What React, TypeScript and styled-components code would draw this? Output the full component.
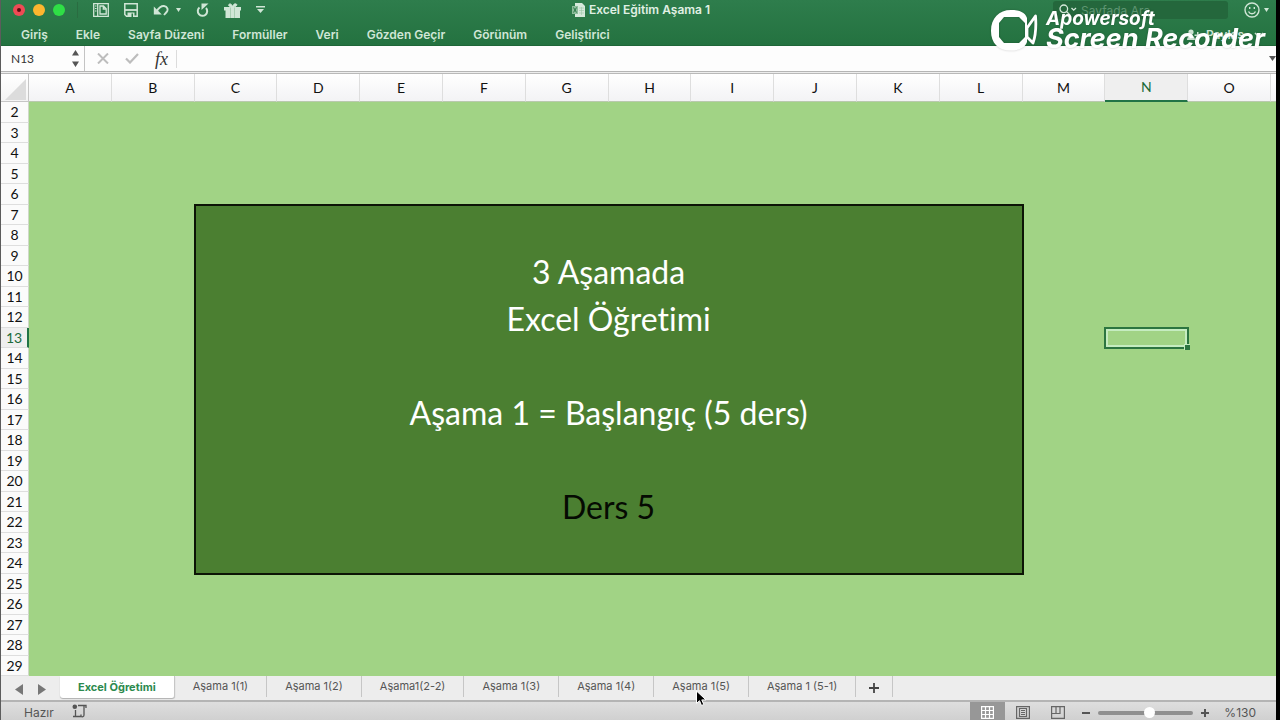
import React from "react";
import styled, { createGlobalStyle, css } from "styled-components";

const UI = `Inter, "Liberation Sans", sans-serif`;
const SHEET = `Lato, "Open Sans", sans-serif`;

const GlobalStyle = createGlobalStyle`
  *, *::before, *::after { box-sizing: border-box; }
  body { margin: 0; background: #000; }
  button, input { font: inherit; color: inherit; border: 0; background: none; padding: 0; margin: 0; }
  svg { display: block; flex: none; }
`;

const Window = styled.div`
  position: relative;
  display: flex;
  flex-direction: column;
  height: 100vh;
  margin-right: 4px;
  border-left: 1px solid #5c5c5c;
  background: #fff;
  font-family: ${UI};
  overflow: hidden;
`;

const Ribbon = styled.header`
  height: 46px;
  flex: none;
  background: linear-gradient(#2e7d4c, #247240);
  border-bottom: 1px solid #1f6638;
  color: #d0e6d6;
`;

const TitleBar = styled.div`
  display: grid;
  grid-template-columns: 1fr auto 1fr;
  align-items: center;
  height: 20px;
  padding: 0 7px 0 12px;
`;

const Group = styled.div<{ $gap: number; $end?: boolean }>`
  display: flex;
  align-items: center;
  gap: ${(p) => p.$gap}px;
  justify-content: ${(p) => (p.$end ? "flex-end" : "flex-start")};
`;

const Light = styled.button<{ $color: string; $dot?: boolean }>`
  display: grid;
  place-items: center;
  width: 12px;
  height: 12px;
  border-radius: 50%;
  background: ${(p) => p.$color};
  &::after {
    content: "";
    width: 4px;
    height: 4px;
    border-radius: 50%;
    background: ${(p) => (p.$dot ? "#5c0c10" : "transparent")};
  }
`;

const Divider = styled.span`
  width: 1px;
  height: 16px;
  margin: 0 15px 0 12px;
  background: #2a6c41;
`;

const IconButton = styled.button`
  display: inline-flex;
  align-items: center;
  justify-content: center;
`;

const DocTitle = styled.h1`
  display: flex;
  align-items: center;
  gap: 4px;
  margin: 0;
  font-size: 12px;
  line-height: 20px;
  font-weight: 600;
  color: #e0f0e4;
`;

const Search = styled.label`
  display: flex;
  align-items: center;
  gap: 4px;
  width: 175px;
  height: 18px;
  padding: 0 6px;
  border-radius: 3px;
  background: #24673c;
  input {
    width: 130px;
    font-size: 12px;
    outline: 0;
  }
  input::placeholder { color: #5f9572; opacity: 1; }
`;

const MenuRow = styled.nav`
  display: flex;
  align-items: center;
  gap: 28px;
  height: 26px;
  padding: 3px 12px 0 20px;
  font-size: 12px;
  font-weight: 600;
`;

const MenuItem = styled.button`
  line-height: 18px;
  white-space: nowrap;
`;

const Share = styled.div`
  display: flex;
  align-items: center;
  gap: 5px;
  margin-left: auto;
`;

const CollapseButton = styled(IconButton)`
  margin-left: 5px;
`;

const FormulaBar = styled.div`
  display: flex;
  align-items: center;
  flex: none;
  height: 25px;
  background: #fdfdfd;
  color: #333;
`;

const NameBox = styled.label`
  display: flex;
  align-items: center;
  justify-content: space-between;
  width: 84px;
  height: 25px;
  padding: 0 5px 0 10px;
  border-right: 1px solid #c4c4c4;
  input {
    width: 50px;
    font-family: ${SHEET};
    font-size: 12px;
    outline: 0;
  }
`;

const FormulaTools = styled.div`
  display: flex;
  align-items: center;
  gap: 16px;
  padding: 0 8px 0 12px;
  height: 18px;
  border-right: 1px solid #dcdcdc;
`;

const Fx = styled.span`
  font-family: "Liberation Serif", serif;
  font-style: italic;
  font-size: 18px;
  line-height: 18px;
`;

const FormulaInput = styled.input`
  flex: 1;
  min-width: 0;
  height: 24px;
  outline: 0;
`;

const SheetArea = styled.main`
  flex: 1;
  min-height: 0;
  border-top: 1px solid #b5b5b5;
  box-shadow: inset 0 1px #ededed, inset 0 2px #b9b9b9;
  padding-top: 2px;
`;

const Table = styled.table`
  width: 100%;
  height: 100%;
  table-layout: fixed;
  border-collapse: separate;
  border-spacing: 0;
  font-family: ${SHEET};
  font-variant-ligatures: none;
  color: #111;
  td, th { padding: 0; }
`;

const Corner = styled.th`
  width: 28px;
  height: 28px;
  background: linear-gradient(#fff, #f4f4f4);
  border-right: 1px solid #c6c6c6;
  border-bottom: 1px solid #c6c6c6;
  svg { margin: 3px 0 0 4px; }
`;

const ColHead = styled.th<{ $active?: boolean }>`
  height: 28px;
  background: linear-gradient(#fff, #f3f3f5);
  border-right: 1px solid #dedede;
  border-bottom: 1px solid #b9c9ae;
  font-size: 14px;
  line-height: 24px;
  font-weight: 400;
  ${(p) =>
    p.$active &&
    css`
      background: #efefef;
      color: #1d6b3a;
      border-bottom: 2px solid #217346;
    `}
`;

const EdgeHead = styled(ColHead)`
  width: 5px;
  border-right: 0;
`;

const RowHead = styled.th<{ $active?: boolean }>`
  background: ${(p) => (p.$active ? "#efefef" : "#fbfbfb")};
  border-bottom: 1px solid #dedede;
  border-right: ${(p) => (p.$active ? "2px solid #217346" : "1px solid #cfd8c8")};
  color: ${(p) => (p.$active ? "#1d6b3a" : "inherit")};
  font-size: 14px;
  line-height: 18px;
  font-weight: 400;
  && { padding-top: 1px; }
`;

const Cell = styled.td`
  background: #a1d385;
`;

const SelectedCell = styled(Cell)`
  position: relative;
  outline: 2px solid #2c7540;
  outline-offset: -1px;
  box-shadow: inset 0 0 0 3px #c5ecc0;
  &::after {
    content: "";
    position: absolute;
    right: -2px;
    bottom: -2px;
    width: 6px;
    height: 6px;
    background: #2c7540;
    border-top: 1px solid #c5ecc0;
    border-left: 1px solid #c5ecc0;
  }
`;

const MergedCell = styled.td`
  background: #4b7f31;
  outline: 2px solid #0c1406;
  outline-offset: -1px;
  vertical-align: middle;
  text-align: center;
  font-size: 32px;
  line-height: 47px;
`;

const Line = styled.div<{ $dark?: boolean }>`
  min-height: 47px;
  color: ${(p) => (p.$dark ? "#050a02" : "#fff")};
`;

const TabStrip = styled.div`
  display: flex;
  flex: none;
  height: 26px;
  background: #ededed;
  border-bottom: 2px solid #b4b4b4;
  color: #555;
`;

const TabArrows = styled.div`
  display: flex;
  align-items: center;
  gap: 15px;
  width: 59px;
  padding: 2px 0 0 14px;
`;

const SheetTab = styled.button<{ $active?: boolean }>`
  height: 21px;
  padding: 0 18px;
  border-right: 1px solid #c6c6c6;
  font-size: 11px;
  line-height: 21px;
  white-space: nowrap;
  ${(p) =>
    p.$active &&
    css`
      height: 22px;
      background: #fff;
      color: #2c8a4e;
      font-weight: 700;
      border-radius: 0 0 3px 3px;
      box-shadow: 0 1px 1px #b0b0b0;
    `}
`;

const AddTab = styled.button`
  display: grid;
  place-items: center;
  width: 37px;
  height: 21px;
  padding-top: 3px;
  border-right: 1px solid #c6c6c6;
`;

const StatusBar = styled.footer`
  display: flex;
  align-items: center;
  justify-content: space-between;
  flex: none;
  height: 18px;
  padding: 0 20px 0 23px;
  background: linear-gradient(#dedede, #d0d0d0);
  color: #555;
  font-size: 12px;
  line-height: 18px;
  overflow: hidden;
`;

const StatusText = styled.span`
  padding-top: 4px;
`;

const ViewButton = styled.button<{ $active?: boolean }>`
  display: grid;
  place-items: center;
  width: 35px;
  height: 18px;
  padding-top: 3px;
  background: ${(p) => (p.$active ? "#979797" : "transparent")};
`;

const ZoomControls = styled.div`
  display: flex;
  align-items: center;
  gap: 8px;
  margin-left: 7px;
  padding-top: 3px;
`;

const ZoomSlider = styled.input`
  appearance: none;
  width: 95px;
  height: 4px;
  border-radius: 2px;
  background: #8f8f8f;
  &::-webkit-slider-thumb {
    appearance: none;
    width: 11px;
    height: 11px;
    border-radius: 50%;
    background: #fff;
  }
`;

const ZoomValue = styled.span`
  width: 39px;
  text-align: right;
`;

const Watermark = styled.div`
  position: absolute;
  top: 9px;
  right: 11px;
  display: flex;
  gap: 8px;
  color: #fff;
  font-style: italic;
  font-weight: 700;
  pointer-events: none;
  filter: drop-shadow(0 0 1px rgba(0, 0, 0, 0.2));
`;

const WatermarkSmall = styled.div`
  font-size: 19px;
  line-height: 20px;
`;

const WatermarkLarge = styled.div`
  font-size: 27px;
  line-height: 20px;
  white-space: nowrap;
`;

const Pointer = styled.svg`
  position: absolute;
  left: 694px;
  top: 690px;
`;

const menus = ["Giriş", "Ekle", "Sayfa Düzeni", "Formüller", "Veri", "Gözden Geçir", "Görünüm", "Geliştirici"];
const columns = "ABCDEFGHIJKLMNO".split("");
const rows = Array.from({ length: 28 }, (_, i) => i + 2);
const sheets = ["Excel Öğretimi", "Aşama 1(1)", "Aşama 1(2)", "Aşama1(2-2)", "Aşama 1(3)", "Aşama 1(4)", "Aşama 1(5)", "Aşama 1 (5-1)"];

const Caret = () => (
  <svg width="5" height="4" viewBox="0 0 5 4"><path d="M0 0h5L2.5 4z" fill="currentColor" /></svg>
);

const QuickAccess = () => (
  <Group $gap={0}>
    <Group $gap={8}>
      <Light $color="#ee4b55" $dot aria-label="Kapat" />
      <Light $color="#fdb62f" aria-label="Küçült" />
      <Light $color="#2fdf46" aria-label="Büyüt" />
    </Group>
    <Divider />
    <Group $gap={15}>
      <IconButton aria-label="Şablonlar">
        <svg width="16" height="14" viewBox="0 0 16 14" fill="none" stroke="currentColor" strokeWidth="1.3">
          <path d="M.7.7h14.6v12.6H.7zM4.700 1v12" />
          <path d="M2 3h1.500M2 5.500h1.500M2 8h1.500" strokeWidth="1" />
          <path d="M7 3h3.500l2.700 2.700V11H7zM10.300 3v3h3" />
        </svg>
      </IconButton>
      <IconButton aria-label="Kaydet">
        <svg width="14" height="14" viewBox="0 0 14 14" fill="none" stroke="currentColor" strokeWidth="1.5">
          <path d="M.8.8h12.400v12.400H2.500L.8 11.500z" />
          <path d="M1 7h12" strokeWidth="1.800" />
          <path d="M3.500 9.500h7V14h-7z" fill="currentColor" stroke="none" />
          <path d="M7.500 10.500h1.500V14H7.500z" fill="#2b7848" stroke="none" />
        </svg>
      </IconButton>
      <Group $gap={7}>
        <IconButton aria-label="Geri Al">
          <svg width="16" height="12" viewBox="0 0 16 12">
            <path d="M3.500 7.500C6 3.500 8.500 1.800 11 2c3.600.3 4.400 4 2.600 6L11 11" fill="none" stroke="currentColor" strokeWidth="1.900" />
            <path d="M.8 2.500v8h8z" fill="currentColor" />
          </svg>
        </IconButton>
        <Caret />
      </Group>
      <IconButton aria-label="Yinele">
        <svg width="13" height="14" viewBox="0 0 13 14">
          <path d="M3.500 4.500A4.700 4.700 0 1 0 10 5" fill="none" stroke="currentColor" strokeWidth="2" />
          <path d="M5.500 .5h7L5.500 7z" fill="currentColor" />
        </svg>
      </IconButton>
      <IconButton aria-label="Hediye">
        <svg width="17" height="15" viewBox="0 0 17 15">
          <path d="M0 4h17v3.500h-1V15H1.500V7.500H0z" fill="currentColor" />
          <path d="M8.500 4C5 4 3.500 2 5.500 1 7.200.6 8 2 8.500 4c.5-2 1.500-3.600 3.500-3C14 1.500 12.500 4 8.500 4z" fill="currentColor" stroke="currentColor" strokeWidth="1" />
          <path d="M6.500 4.500V15M10.500 4.500V15" stroke="#8dbd9b" strokeWidth=".6" />
        </svg>
      </IconButton>
      <IconButton aria-label="Özelleştir">
        <svg width="9" height="8" viewBox="0 0 9 8" fill="currentColor"><path d="M0 0h9v1.500H0zM1 3h7L4.500 7z" /></svg>
      </IconButton>
    </Group>
  </Group>
);

export default function App() {
  return (
    <>
      <GlobalStyle />
      <Window>
        <Ribbon>
          <TitleBar>
            <QuickAccess />
            <DocTitle>
              <svg width="13" height="14" viewBox="0 0 13 14">
                <path d="M4 0h6l3 3v11H3V0z" fill="#d6e9db" />
                <path d="M0 3h6v8H0z" fill="#8dbd9b" />
                <path d="M1.500 4.500l3 5M4.500 4.500l-3 5" stroke="#2b7848" />
                <path d="M7 5h5M7 7.500h5M7 10h5M9.500 4v8" stroke="#9cc7a8" strokeWidth=".6" />
              </svg>
              Excel Eğitim Aşama 1
            </DocTitle>
            <Group $gap={16} $end>
              <Search>
                <svg width="18" height="12" viewBox="0 0 18 12" fill="none" stroke="#d6e9db" strokeWidth="1.300">
                  <circle cx="4.800" cy="4.800" r="3.800" /><path d="M7.500 7.500L11 11M12.500 4l2.200 2.200L17 4" />
                </svg>
                <input type="search" placeholder="Sayfada Ara" aria-label="Sayfada Ara" />
              </Search>
              <Group $gap={4}>
                <IconButton aria-label="Geri bildirim">
                  <svg width="16" height="16" viewBox="0 0 16 16" fill="none" stroke="currentColor" strokeWidth="1.400">
                    <circle cx="8" cy="8" r="7" /><path d="M4.500 9.500c1.500 3 5.500 3 7 0M5.700 5v2M10.300 5v2" />
                  </svg>
                </IconButton>
                <Caret />
              </Group>
            </Group>
          </TitleBar>
          <MenuRow>
            {menus.map((m) => <MenuItem key={m}>{m}</MenuItem>)}
            <Share>
              <svg width="14" height="12" viewBox="0 0 14 12" fill="currentColor">
                <circle cx="4" cy="3" r="2.600" /><path d="M0 11c0-6 8-6 8 0zM10 3h1.500v2.500H14V7h-2.500v2.500H10V7H7.500V5.500H10z" />
              </svg>
              <MenuItem>Paylaş</MenuItem>
              <CollapseButton aria-label="Şeridi daralt">
                <svg width="10" height="6" viewBox="0 0 10 6" fill="none" stroke="currentColor" strokeWidth="1.500"><path d="M1 1l4 4 4-4" /></svg>
              </CollapseButton>
            </Share>
          </MenuRow>
        </Ribbon>

        <FormulaBar>
          <NameBox>
            <input defaultValue="N13" aria-label="Ad Kutusu" />
            <svg width="7" height="17" viewBox="0 0 7 17" fill="#555"><path d="M0 5.500L3.500 0 7 5.500zM0 11.500h7L3.500 17z" /></svg>
          </NameBox>
          <FormulaTools>
            <IconButton aria-label="İptal">
              <svg width="12" height="11" viewBox="0 0 12 11" stroke="#bdbdbd" strokeWidth="2"><path d="M1 .5l10 10M11 .5L1 10.500" /></svg>
            </IconButton>
            <IconButton aria-label="Gir">
              <svg width="14" height="11" viewBox="0 0 14 11" fill="none" stroke="#bdbdbd" strokeWidth="2.200"><path d="M1 5.500L5 9.500 13 1" /></svg>
            </IconButton>
            <Fx>fx</Fx>
          </FormulaTools>
          <FormulaInput aria-label="Formül" />
          <IconButton aria-label="Formül çubuğunu genişlet">
            <svg width="7" height="5" viewBox="0 0 7 5"><path d="M0 0h7L3.500 5z" fill="#555" /></svg>
          </IconButton>
        </FormulaBar>

        <SheetArea>
          <Table>
            <thead>
              <tr>
                <Corner aria-label="Tümünü seç">
                  <svg width="21" height="21" viewBox="0 0 21 21"><path d="M21 0v21H0z" fill="#dcdcdc" /></svg>
                </Corner>
                {columns.map((c) => <ColHead key={c} scope="col" $active={c === "N"}>{c}</ColHead>)}
                <EdgeHead />
              </tr>
            </thead>
            <tbody>
              {rows.map((r) => (
                <tr key={r}>
                  <RowHead scope="row" $active={r === 13}>{r}</RowHead>
                  {columns.map((c, i) => {
                    const merged = r >= 7 && r <= 24 && i >= 2 && i <= 11;
                    if (merged) {
                      return r === 7 && i === 2 ? (
                        <MergedCell key={c} colSpan={10} rowSpan={18}>
                          <Line>3 Aşamada</Line>
                          <Line>Excel Öğretimi</Line>
                          <Line />
                          <Line>Aşama 1 = Başlangıç (5 ders)</Line>
                          <Line />
                          <Line $dark>Ders 5</Line>
                        </MergedCell>
                      ) : null;
                    }
                    return r === 13 && c === "N" ? <SelectedCell key={c} /> : <Cell key={c} />;
                  })}
                  <Cell />
                </tr>
              ))}
            </tbody>
          </Table>
        </SheetArea>

        <TabStrip>
          <TabArrows>
            <IconButton aria-label="Önceki sayfa"><svg width="8" height="11" viewBox="0 0 8 11"><path d="M8 0v11L0 5.500z" fill="#777" /></svg></IconButton>
            <IconButton aria-label="Sonraki sayfa"><svg width="8" height="11" viewBox="0 0 8 11"><path d="M0 0v11l8-5.500z" fill="#777" /></svg></IconButton>
          </TabArrows>
          {sheets.map((s, i) => <SheetTab key={s} $active={i === 0}>{s}</SheetTab>)}
          <AddTab aria-label="Sayfa ekle">
            <svg width="10" height="10" viewBox="0 0 10 10" stroke="#444" strokeWidth="1.800"><path d="M5 0v10M0 5h10" /></svg>
          </AddTab>
        </TabStrip>

        <StatusBar>
          <Group $gap={18}>
            <StatusText>Hazır</StatusText>
            <IconButton aria-label="Makro kaydet">
              <svg width="15" height="14" viewBox="0 0 15 14" fill="none" stroke="#555" strokeWidth="1.300">
                <circle cx="2.800" cy="2.800" r="2.300" fill="#555" stroke="none" />
                <path d="M6 1.500h8v2.500M12 1.500v9.500c0 2-2 2-3 1.500H1M3.500 6v6M9 12.500v-2" />
              </svg>
            </IconButton>
          </Group>
          <Group $gap={0}>
            <ViewButton $active aria-label="Normal">
              <svg width="13" height="13" viewBox="0 0 13 13" fill="none" stroke="#fff" strokeWidth="1.200"><path d="M.6.6h11.800v11.800H.6zM4.500.5v12M8.500.5v12M.5 4.500h12M.5 8.500h12" /></svg>
            </ViewButton>
            <ViewButton aria-label="Sayfa Düzeni">
              <svg width="14" height="13" viewBox="0 0 14 13" fill="none" stroke="#666" strokeWidth="1.200"><path d="M.6.6h12.800v11.800H.6zM3.500 2.500h7v8h-7zM5 4.500h4M5 6.500h4M5 8.500h4" /></svg>
            </ViewButton>
            <ViewButton aria-label="Sayfa Sonu Önizleme">
              <svg width="14" height="13" viewBox="0 0 14 13" fill="none" stroke="#666" strokeWidth="1.200"><path d="M.6.6h12.800v11.800H.6zM.6 7.500h8.400V.6M5 .6v6.900" /></svg>
            </ViewButton>
            <ZoomControls>
              <IconButton aria-label="Uzaklaştır"><svg width="8" height="8" viewBox="0 0 8 8" stroke="#555" strokeWidth="2"><path d="M0 4h8" /></svg></IconButton>
              <ZoomSlider type="range" min={0} max={100} defaultValue={55} aria-label="Yakınlaştırma" />
              <IconButton aria-label="Yakınlaştır"><svg width="8" height="8" viewBox="0 0 8 8" stroke="#555" strokeWidth="2"><path d="M0 4h8M4 0v8" /></svg></IconButton>
              <ZoomValue>%130</ZoomValue>
            </ZoomControls>
          </Group>
        </StatusBar>

        <Watermark>
          <svg width="47" height="42" viewBox="0 0 47 42">
            <path fillRule="evenodd" fill="#fff" d="M20 1c8 0 14 2 16 8v24c-2 6-9 8.500-16 8.500C7 41.500 0 34 0 22 0 9 8 1 20 1zM13 8l-5 6v14l5 6h15l6-6V14l-6-6z" />
            <path d="M36 19l8.500-12c.8 10 0 20-2.500 27l-6-6z" fill="none" stroke="#fff" strokeWidth="2.800" strokeLinejoin="round" />
          </svg>
          <div>
            <WatermarkSmall>Apowersoft</WatermarkSmall>
            <WatermarkLarge>Screen Recorder</WatermarkLarge>
          </div>
        </Watermark>

        <Pointer width="12" height="17" viewBox="0 0 12 17">
          <path d="M1.500 1v12.500l3-2.800 2 4.800 2.300-1-2-4.600h4.200z" fill="#000" stroke="#fff" strokeWidth="1" />
        </Pointer>
      </Window>
    </>
  );
}
